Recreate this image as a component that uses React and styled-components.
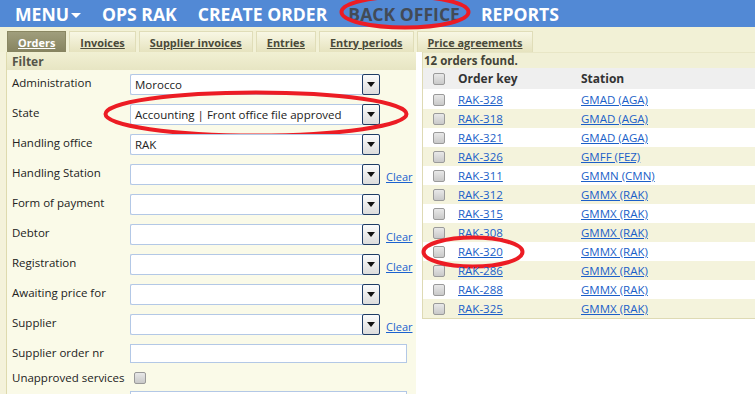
import React from 'react';
import styled, { createGlobalStyle } from 'styled-components';

const GlobalStyle = createGlobalStyle`
  html, body {
    margin: 0;
    padding: 0;
    background: #ffffff;
  }
  body {
    font-family: 'Open Sans', 'Noto Sans', Arial, sans-serif;
  }
`;

const navItems = ['MENU', 'OPS RAK', 'CREATE ORDER', 'BACK OFFICE', 'REPORTS'];
const tabs = ['Orders', 'Invoices', 'Supplier invoices', 'Entries', 'Entry periods', 'Price agreements'];

const filters = [
  { label: 'Administration', type: 'select', value: 'Morocco' },
  { label: 'State', type: 'select', value: 'Accounting | Front office file approved', marked: true },
  { label: 'Handling office', type: 'select', value: 'RAK' },
  { label: 'Handling Station', type: 'select', clear: true },
  { label: 'Form of payment', type: 'select' },
  { label: 'Debtor', type: 'select', clear: true },
  { label: 'Registration', type: 'select', clear: true },
  { label: 'Awaiting price for', type: 'select' },
  { label: 'Supplier', type: 'select', clear: true },
  { label: 'Supplier order nr', type: 'text' },
  { label: 'Unapproved services', type: 'check' },
  { label: '', type: 'text' },
];

const orders = [
  ['RAK-328', 'GMAD (AGA)'],
  ['RAK-318', 'GMAD (AGA)'],
  ['RAK-321', 'GMAD (AGA)'],
  ['RAK-326', 'GMFF (FEZ)'],
  ['RAK-311', 'GMMN (CMN)'],
  ['RAK-312', 'GMMX (RAK)'],
  ['RAK-315', 'GMMX (RAK)'],
  ['RAK-308', 'GMMX (RAK)'],
  ['RAK-320', 'GMMX (RAK)'],
  ['RAK-286', 'GMMX (RAK)'],
  ['RAK-288', 'GMMX (RAK)'],
  ['RAK-325', 'GMMX (RAK)'],
];

const Mark = ({ w, h }) => (
  <MarkSvg width={w} height={h} viewBox={`0 0 ${w} ${h}`}>
    <ellipse cx={w / 2} cy={h / 2} rx={w / 2 - 2.5} ry={h / 2 - 2.5} fill="none" stroke="#ec1c24" strokeWidth="4" />
  </MarkSvg>
);

const Caret = () => (
  <svg width="8" height="5" viewBox="0 0 8 5">
    <path d="M0 0 H8 L4 5 Z" fill="#111" />
  </svg>
);

const Select = ({ value }) => (
  <SelectBox>
    <SelectValue>{value}</SelectValue>
    <SelectButton><Caret /></SelectButton>
  </SelectBox>
);

export default function App() {
  return (
    <Page>
      <GlobalStyle />
      <TopNav>
        {navItems.map((item) => (
          <NavItem key={item} $active={item === 'BACK OFFICE'}>
            {item}
            {item === 'MENU' && (
              <NavCaret width="10" height="5" viewBox="0 0 10 5">
                <path d="M0 0 H10 L5 5 Z" fill="#fff" />
              </NavCaret>
            )}
            {item === 'BACK OFFICE' && <NavMark><Mark w={132} h={36} /></NavMark>}
          </NavItem>
        ))}
      </TopNav>

      <TabBar>
        {tabs.map((t) => (
          <Tab key={t} $active={t === 'Orders'}>{t}</Tab>
        ))}
      </TabBar>

      <Main>
        <FilterPanel>
          <PanelHeader>Filter</PanelHeader>
          <FilterList>
            {filters.map((f, i) => (
              <FilterRow key={i} $type={f.type}>
                <Label>{f.label}</Label>
                {f.type === 'select' && (
                  <Field>
                    <Select value={f.value} />
                    {f.marked && <StateMark><Mark w={306} h={48} /></StateMark>}
                  </Field>
                )}
                {f.type === 'text' && <TextInput />}
                {f.type === 'check' && <CheckBox $gap />}
                {f.clear && <ClearLink>Clear</ClearLink>}
              </FilterRow>
            ))}
          </FilterList>
        </FilterPanel>

        <ResultPanel>
          <Results>
            <ResultCount>12 orders found.</ResultCount>
            <Table>
              <HeadRow>
                <CheckCell><CheckBox /></CheckCell>
                <KeyCell>Order key</KeyCell>
                <StationCell>Station</StationCell>
              </HeadRow>
              {orders.map(([key, station], i) => (
                <Row key={key} $alt={i % 2 === 1}>
                  <CheckCell><CheckBox /></CheckCell>
                  <KeyCell>
                    <Link>{key}</Link>
                    {key === 'RAK-320' && <RowMark><Mark w={104} h={34} /></RowMark>}
                  </KeyCell>
                  <StationCell><Link>{station}</Link></StationCell>
                </Row>
              ))}
            </Table>
          </Results>
        </ResultPanel>
      </Main>
    </Page>
  );
}

const Page = styled.div`
  width: 755px;
  height: 394px;
  overflow: hidden;
  background: #ffffff;
  color: #222;
`;

const TopNav = styled.div`
  height: 27px;
  background: #5289d5;
  display: flex;
  align-items: center;
  padding-left: 15px;
  gap: 21px;
`;

const NavItem = styled.div`
  position: relative;
  font-size: 17.6px;
  font-weight: 700;
  color: ${(p) => (p.$active ? '#424b57' : '#ffffff')};
  white-space: nowrap;
  display: flex;
  align-items: center;
`;

const NavCaret = styled.svg`
  margin-left: 2px;
  margin-top: 3px;
`;

const MarkSvg = styled.svg`
  display: block;
`;

const NavMark = styled.div`
  position: absolute;
  left: -9px;
  top: -8px;
`;

const TabBar = styled.div`
  height: 25px;
  background: #f2f1d6;
  display: flex;
  align-items: flex-end;
  padding-left: 7px;
  gap: 3px;
  box-sizing: border-box;
`;

const Tab = styled.div`
  height: 20px;
  padding: 0 10px;
  display: flex;
  align-items: center;
  font-size: 10.9px;
  font-weight: 700;
  text-decoration: underline;
  color: ${(p) => (p.$active ? '#ffffff' : '#4a4a3a')};
  background: ${(p) =>
    p.$active
      ? 'linear-gradient(#a09e7c, #86835f)'
      : 'linear-gradient(#f8f7e4, #e6e3bf)'};
  border: 1px solid ${(p) => (p.$active ? '#8a8762' : '#e0ddb8')};
  border-bottom: none;
`;

const Main = styled.div`
  display: flex;
  align-items: flex-start;
`;

const FilterPanel = styled.div`
  width: 409px;
  margin-left: 6px;
  border-left: 1px solid #dedaae;
  background: #fafae8;
  height: 342px;
  box-shadow: -6px 0 0 #f4f2da;
`;

const PanelHeader = styled.div`
  height: 18px;
  padding-left: 5px;
  display: flex;
  align-items: center;
  font-size: 12px;
  font-weight: 700;
  color: #555548;
  background: linear-gradient(#f1f0d3, #e7e5c3);
`;

const FilterList = styled.div`
  display: flex;
  flex-direction: column;
  padding-top: 4px;
`;

const FilterRow = styled.div`
  display: flex;
  align-items: flex-start;
  height: ${(p) => (p.$type === 'check' ? '22px' : p.$type === 'text' ? '25px' : '30px')};
`;

const Label = styled.div`
  width: 118px;
  padding-left: 5px;
  padding-top: 1px;
  font-size: 11.5px;
  color: #222;
  white-space: nowrap;
`;

const Field = styled.div`
  position: relative;
`;

const StateMark = styled.div`
  position: absolute;
  left: -27px;
  top: -14px;
  pointer-events: none;
`;

const SelectBox = styled.div`
  width: 250px;
  height: 21px;
  display: flex;
  box-sizing: border-box;
  background: #fff;
  border: 1px solid #b3c8e6;
  border-right: none;
  border-radius: 2px;
`;

const SelectValue = styled.div`
  flex: 1;
  padding-left: 4px;
  font-size: 11.5px;
  line-height: 19px;
  color: #222;
  white-space: nowrap;
`;

const SelectButton = styled.div`
  width: 18px;
  height: 21px;
  margin-top: -1px;
  box-sizing: border-box;
  border: 1px solid #1f3c66;
  border-radius: 2px;
  background: linear-gradient(#fbfbfb, #dcdcdc);
  display: flex;
  align-items: center;
  justify-content: center;
`;

const ClearLink = styled.a`
  margin-left: 6px;
  margin-top: 5px;
  font-size: 11px;
  color: #1b62cf;
  text-decoration: underline;
`;

const TextInput = styled.div`
  width: 277px;
  height: 19px;
  box-sizing: border-box;
  background: #fff;
  border: 1px solid #b3c8e6;
`;

const CheckBox = styled.div`
  width: 12px;
  height: 12px;
  box-sizing: border-box;
  border: 1px solid #9a9a9a;
  border-radius: 2px;
  background: linear-gradient(#e8e8e8, #c9c9c9);
  margin-left: ${(p) => (p.$gap ? '4px' : '0')};
  margin-top: ${(p) => (p.$gap ? '3px' : '0')};
`;

const ResultPanel = styled.div`
  flex: 1;
  padding-left: 6px;
  background: #fff;
`;

const Results = styled.div`
  border-left: 1px solid #dedab4;
`;

const ResultCount = styled.div`
  height: 15px;
  padding-left: 1px;
  display: flex;
  align-items: center;
  font-size: 11.5px;
  font-weight: 700;
  color: #444438;
  background: #f1f0d6;
  border-top: 1px solid #e8e6c6;
`;

const Table = styled.div`
  border-bottom: 1px solid #dedab4;
`;

const HeadRow = styled.div`
  height: 21px;
  display: flex;
  align-items: center;
  background: #efefef;
  font-size: 12px;
  font-weight: 700;
  color: #333;
  border-bottom: 1px solid #fff;
`;

const Row = styled.div`
  height: 19px;
  display: flex;
  align-items: center;
  background: ${(p) => (p.$alt ? '#f4f3dc' : '#ffffff')};
  font-size: 11.5px;
`;

const CheckCell = styled.div`
  width: 35px;
  padding-left: 10px;
  box-sizing: border-box;
`;

const KeyCell = styled.div`
  position: relative;
  width: 123px;
`;

const StationCell = styled.div`
  flex: 1;
`;

const RowMark = styled.div`
  position: absolute;
  left: -37px;
  top: -9px;
  pointer-events: none;
`;

const Link = styled.a`
  color: #1b5fc8;
  text-decoration: underline;
`;
